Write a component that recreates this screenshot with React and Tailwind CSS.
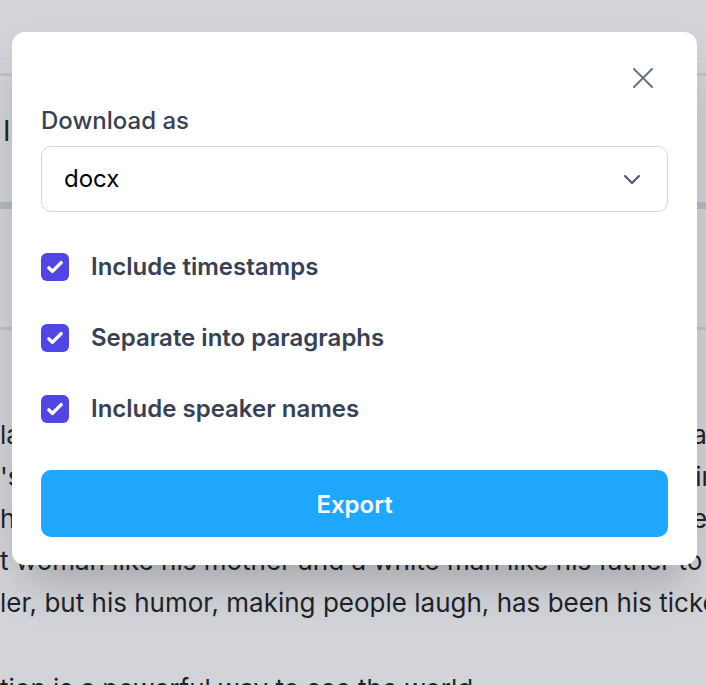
import { useState } from 'react';

const lines = [
  "lawyer and comedian who grew up in South Africa, who also",
  "'s career as a comedian began in his early twenties, singing",
  "hildhood was shaped by apartheid, a time when it was illegal and",
  "t woman like his mother and a white man like his father to",
  "ler, but his humor, making people laugh, has been his ticket",
];

function Check() {
  return (
    <svg viewBox="0 0 16 16" className="w-[28px] h-[28px]" fill="white">
      <path d="M12.207 4.793a1 1 0 010 1.414l-5 5a1 1 0 01-1.414 0l-2-2a1 1 0 011.414-1.414L6.5 9.086l4.293-4.293a1 1 0 011.414 0z" />
    </svg>
  );
}

export default function App() {
  const [opts, setOpts] = useState({ timestamps: true, paragraphs: true, speakers: true });
  const toggle = key => setOpts(o => ({ ...o, [key]: !o[key] }));

  const options = [
    { key: 'timestamps', label: 'Include timestamps' },
    { key: 'paragraphs', label: 'Separate into paragraphs' },
    { key: 'speakers', label: 'Include speaker names' },
  ];

  return (
    <div className="relative h-[685px] w-[706px] overflow-hidden bg-white font-['Inter',sans-serif]">
      {/* Page behind the dialog */}
      <div className="h-[59px] border-b border-gray-100" />
      <div className="mt-[14px] h-[3px] bg-gray-200" />
      <h1 className="mt-[38px] pl-[3px] text-[28px] leading-[34px] text-black">Interview transcript</h1>
      <div className="mt-[54px] h-[7px] bg-[#d9dadd]" />
      <div className="mt-[118px] h-[3px] bg-gray-200" />
      <div className="mt-[84px] whitespace-nowrap text-[26px] leading-[42px] text-black">
        {lines.map((l, i) => <div key={i}>{l}</div>)}
        <div className="mt-[44px]">tion is a powerful way to see the world</div>
      </div>

      {/* Overlay */}
      <div className="absolute inset-0 bg-gray-500/30 pl-[12px] pt-[32px]">
        <div className="w-[685px] rounded-[13px] bg-white px-[29px] pt-[36px] pb-[28px] shadow-2xl">
          <div className="flex justify-end pr-[15px]">
            <button className="text-gray-500">
              <svg viewBox="0 0 20 20" className="w-[20px] h-[20px]" fill="none" stroke="currentColor" strokeWidth={2} strokeLinecap="round">
                <path d="M1 1l18 18M19 1L1 19" />
              </svg>
            </button>
          </div>

          <label className="mt-[17px] block text-[24px] leading-[32px] font-medium text-gray-700">Download as</label>
          <div className="mt-[9px] flex h-[66px] items-center justify-between rounded-[10px] border-[1.5px] border-gray-300 pl-[22px] pr-[27px]">
            <span className="text-[24px] text-black">docx</span>
            <svg viewBox="0 0 16 9" className="w-[16px] h-[9px]" fill="none" stroke="#4b5563" strokeWidth={2} strokeLinecap="round" strokeLinejoin="round">
              <path d="M1 1l7 7 7-7" />
            </svg>
          </div>

          <div className="mt-[39px] flex flex-col gap-[39px]">
            {options.map(o => (
              <div key={o.key} onClick={() => toggle(o.key)} className="flex h-[32px] cursor-pointer items-center gap-[22px]">
                <span className={`flex h-[28px] w-[28px] items-center justify-center rounded-[6px] ${opts[o.key] ? 'bg-[#4f46e5]' : 'border border-gray-300 bg-white'}`}>
                  {opts[o.key] && <Check />}
                </span>
                <span className="text-[24px] leading-[32px] font-semibold text-gray-700">{o.label}</span>
              </div>
            ))}
          </div>

          <button className="mt-[45px] h-[67px] w-full rounded-[10px] bg-[#1ea7fd] pt-[3px] text-[24px] font-semibold text-white">
            Export
          </button>
        </div>
      </div>
    </div>
  );
}
